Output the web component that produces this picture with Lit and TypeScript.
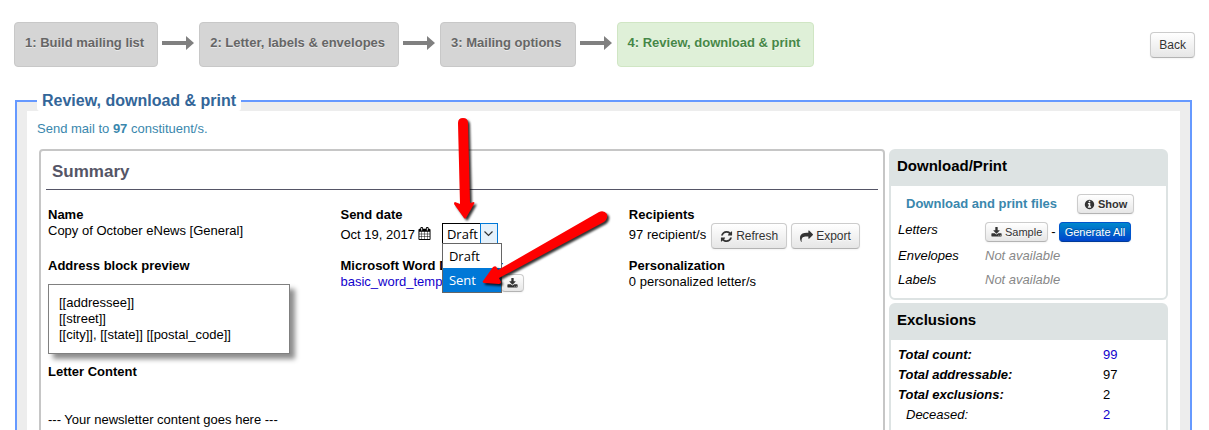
import { LitElement, html, css, svg } from "lit";
import { customElement, property, state } from "lit/decorators.js";
import { classMap } from "lit/directives/class-map.js";

const ICONS: Record<string, string> = {
  refresh:
    "M1639 1056q0 5-1 7-64 268-268 434.500t-478 166.500q-146 0-282.500-55t-243.500-157l-129 129q-19 19-45 19t-45-19-19-45v-448q0-26 19-45t45-19h448q26 0 45 19t19 45-19 45l-137 137q71 66 161 102t187 36q134 0 250-65t186-179q11-17 53-117 8-23 30-23h192q13 0 22.500 9.500t9.500 22.500zm25-800v448q0 26-19 45t-45 19h-448q-26 0-45-19t-19-45 19-45l138-138q-148-137-349-137-134 0-250 65t-186 179q-11 17-53 117-8 23-30 23h-199q-13 0-22.500-9.500t-9.500-22.500v-7q65-268 270-434.500t480-166.500q146 0 284 55.500t245 156.500l130-129q19-19 45-19t45 19 19 45z",
  share:
    "M1792 640q0 26-19 45l-512 512q-19 19-45 19t-45-19-19-45v-256h-224q-98 0-175.500 6t-154 21.500-133 42.500-105.500 69.500-80 101-48.500 138.500-17.500 181q0 55 5 123 0 6 2.500 23.500t2.500 26.500q0 15-8.500 25t-23.500 10q-16 0-28-17-7-9-13-22t-13.500-30-10.500-24q-127-285-127-451 0-199 53-333 162-403 875-403h224v-256q0-26 19-45t45-19 45 19l512 512q19 19 19 45z",
  info:
    "M1152 1376v-160q0-14-9-23t-23-9h-96v-512q0-14-9-23t-23-9h-320q-14 0-23 9t-9 23v160q0 14 9 23t23 9h96v320h-96q-14 0-23 9t-9 23v160q0 14 9 23t23 9h448q14 0 23-9t9-23zm-128-896v-160q0-14-9-23t-23-9h-192q-14 0-23 9t-9 23v160q0 14 9 23t23 9h192q14 0 23-9t9-23zm640 416q0 209-103 385.500t-279.500 279.500-385.500 103-385.500-103-279.500-279.500-103-385.500 103-385.500 279.500-279.500 385.500-103 385.500 103 279.500 279.500 103 385.500z",
  download:
    "M1344 1344q0-26-19-45t-45-19-45 19-19 45 19 45 45 19 45-19 19-45zm256 0q0-26-19-45t-45-19-45 19-19 45 19 45 45 19 45-19 19-45zm128-224v320q0 40-28 68t-68 28h-1472q-40 0-68-28t-28-68v-320q0-40 28-68t68-28h465l135 136q58 56 136 56t136-56l136-136h464q40 0 68 28t28 68zm-325-569q17 41-14 70l-448 448q-18 19-45 19t-45-19l-448-448q-31-29-14-70 17-39 59-39h256v-448q0-26 19-45t45-19h256q26 0 45 19t19 45v448h256q42 0 59 39z",
  calendar:
    "M192 1664h288v-288h-288v288zm352 0h320v-288h-320v288zm-352-352h288v-320h-288v320zm352 0h320v-320h-320v320zm-352-384h288v-288h-288v288zm736 736h320v-288h-320v288zm-384-736h320v-288h-320v288zm768 736h288v-288h-288v288zm-384-352h320v-320h-320v320zm-352-864v-288q0-13-9.500-22.500t-22.500-9.500h-64q-13 0-22.500 9.500t-9.500 22.500v288q0 13 9.500 22.500t22.500 9.500h64q13 0 22.500-9.500t9.500-22.500zm736 864h288v-320h-288v320zm-384-384h320v-288h-320v288zm384 0h288v-288h-288v288zm32-480v-288q0-13-9.500-22.500t-22.500-9.500h-64q-13 0-22.500 9.500t-9.500 22.500v288q0 13 9.500 22.500t22.500 9.500h64q13 0 22.500-9.500t9.500-22.500zm384-64v1280q0 52-38 90t-90 38h-1408q-52 0-90-38t-38-90v-1280q0-52 38-90t90-38h128v-96q0-66 47-113t113-47h64q66 0 113 47t47 113v96h384v-96q0-66 47-113t113-47h64q66 0 113 47t47 113v96h128q52 0 90 38t38 90z",
};

@customElement("app-icon")
export class AppIcon extends LitElement {
  @property() name = "info";

  static styles = css`
    :host { display: inline-flex; flex: none; width: 13px; height: 13px; }
    .glyph { width: 100%; height: 100%; fill: currentColor; overflow: visible; }
  `;

  render() {
    return html`<svg class="glyph" viewBox="0 0 1792 1792" aria-hidden="true">
      ${svg`<path d=${ICONS[this.name]} />`}
    </svg>`;
  }
}

@customElement("side-panel")
export class SidePanel extends LitElement {
  @property() heading = "";

  static styles = css`
    :host { display: block; border: 2px solid #dde3e3; border-radius: 6px; background: #fff; }
    .heading {
      margin: 0; padding: 5px 6px 10px; background: #dde3e3;
      font-size: 15px; line-height: 20px; font-weight: bold; color: #000;
    }
  `;

  render() {
    return html`<h2 class="heading">${this.heading}</h2><slot></slot>`;
  }
}

const STEPS = [
  "1: Build mailing list",
  "2: Letter, labels & envelopes",
  "3: Mailing options",
  "4: Review, download & print",
];

const EXCLUSIONS = [
  { label: "Total count:", value: "99", link: true, sub: false },
  { label: "Total addressable:", value: "97", link: false, sub: false },
  { label: "Total exclusions:", value: "2", link: false, sub: false },
  { label: "Deceased:", value: "2", link: true, sub: true },
];

@customElement("app-root")
export class AppRoot extends LitElement {
  @state() private status = "Draft";
  @state() private highlighted = "Sent";

  static styles = css`
    :host {
      display: block; position: relative; height: 100vh; overflow: hidden;
      background: #fff; color: #000;
      font: 13px/16px "Liberation Sans", Arial, sans-serif;
    }
    * { box-sizing: border-box; }
    a { color: #1100cc; text-decoration: none; }

    .top { display: flex; justify-content: space-between; align-items: flex-start; padding: 22px 14px 0; }
    .steps { display: flex; align-items: flex-start; gap: 5px; margin: 0; padding: 0; list-style: none; }
    .step { display: flex; align-items: flex-start; gap: 4px; }
    .box {
      height: 45px; padding: 12px 13px 12px 10px; border: 1px solid #c8c8c8; border-radius: 4px;
      background: #d5d5d5; color: #666; font-weight: bold; white-space: nowrap;
      text-shadow: 0 1px 0 rgba(255, 255, 255, 0.5);
    }
    .box.current { background: #dff0d8; border-color: #d0e6c4; color: #468847; }
    .next { width: 32px; height: 14px; margin-top: 14px; fill: #808080; }

    .btn {
      display: inline-flex; align-items: center; justify-content: center; gap: 3px;
      border: 1px solid #ccc; border-bottom-color: #b3b3b3; border-radius: 4px;
      background: linear-gradient(#fff, #e6e6e6); color: #333;
      font: 12px/16px "Liberation Sans", Arial, sans-serif;
      box-shadow: 0 1px 2px rgba(0, 0, 0, 0.05);
      text-shadow: 0 1px 1px rgba(255, 255, 255, 0.75);
      height: 26px; padding: 0 8px; white-space: nowrap; cursor: pointer;
    }
    .back { margin-top: 10px; }
    .small { height: 20px; padding: 0 6px; font-size: 11px; }
    .small app-icon { width: 11px; height: 11px; }
    .bold { font-weight: bold; }
    .icon-only { height: 18px; padding: 0 5px; margin-left: 7px; }
    .primary {
      background: linear-gradient(#0088cc, #0044cc); border-color: #0055cc #0055cc #003a99;
      color: #fff; text-shadow: 0 -1px 0 rgba(0, 0, 0, 0.25);
    }

    .review {
      margin: 24px 17px 0 15px; padding: 0 10px 10px; min-width: 0;
      border: 2px solid #6699ff; background: #ededed;
    }
    .title {
      margin-left: 10px; padding: 0 5px; border-radius: 3px; background: #fff;
      color: #336699; font-size: 16px; line-height: 20px; font-weight: bold;
    }
    .sheet { padding: 10px 12px 40px 10px; background: #fff; }
    .intro { margin: 0; color: #3a87ad; }
    .columns { display: grid; grid-template-columns: minmax(0, 1fr) 279px; gap: 4px; margin: 12px 0 0 2px; }

    .summary { border: 2px solid #c6c6c6; border-radius: 4px; padding: 11px 5px; min-height: 320px; }
    .heading {
      margin: 0; padding: 0 6px 7px; border-bottom: 1px solid #555566; color: #555566;
      font-size: 17px; line-height: 20px; font-weight: bold;
    }
    .facts {
      display: grid; grid-template-columns: 71fr 70fr 60fr; row-gap: 2px;
      padding: 17px 2px 0;
    }
    .label { margin: 0; font-size: 13px; line-height: 16px; font-weight: bold; white-space: nowrap; }
    .value { margin: 0; display: flex; align-items: flex-start; white-space: nowrap; }
    .roomy { height: 33px; }
    .date { padding-top: 4px; display: flex; gap: 3px; }
    .count { padding-top: 4px; margin-right: 5px; }
    .recipients .btn + .btn { margin-left: 4px; }

    .picker { position: relative; margin-left: 11px; }
    .select {
      appearance: none; display: block; width: 56px; height: 21px; padding: 0 0 0 4px; margin: 0;
      border: 1px solid #000; border-radius: 0; background: #fff; color: #000;
      font: 13px/18px "Open Sans", "Noto Sans", sans-serif;
    }
    .drop {
      position: absolute; top: 0; right: 0; width: 18px; height: 21px; pointer-events: none;
      border: 1px solid #0078d7; background: #e5f1fb;
      display: flex; align-items: center; justify-content: center;
    }
    .chevron { width: 9px; height: 6px; fill: none; stroke: #333; stroke-width: 1.2; }
    .menu {
      position: absolute; z-index: 1; top: 20px; left: 0; width: 60px; margin: 0; padding: 0;
      border: 1px solid #666; background: #fff; list-style: none;
      font: 13px/24px "Open Sans", "Noto Sans", sans-serif;
    }
    .option { padding-left: 6px; }
    .option.active { background: #0078d7; color: #fff; }

    .address {
      width: 242px; margin: 10px 0; padding: 10px; border: 1px solid #808080;
      background: #fff; box-shadow: 5px 5px 5px rgba(0, 0, 0, 0.45);
    }
    .letter { padding: 0 2px; }
    .body { margin: 32px 0 0; }

    .side { display: flex; flex-direction: column; gap: 3px; }
    .files { padding: 8px 7px 2px; }
    .files-head { display: flex; align-items: center; padding-left: 8px; gap: 20px; margin-bottom: 8px; }
    .files-title { margin: 0; font-size: 13px; line-height: 16px; color: #3a87ad; font-weight: bold; }
    .table { border-collapse: collapse; width: 100%; table-layout: fixed; }
    .table th, .table td { padding: 0; text-align: left; vertical-align: top; font-weight: normal; }
    .files .table th { width: 87px; height: 24px; font-style: italic; }
    .files .table .first th, .files .table .first td { height: 26px; }
    .table .none { color: #888; font-style: italic; }
    .actions { display: flex; align-items: center; gap: 3px; }
    .actions .small { padding: 0 5px; }
    .totals { padding: 5px 7px; min-height: 130px; }
    .totals .table th { width: 205px; height: 20px; line-height: 20px; font-style: italic; font-weight: bold; }
    .totals .table td { line-height: 20px; }
    .totals .table .sub th { font-weight: normal; padding-left: 8px; }

    .pointers {
      position: absolute; left: 0; top: 0; width: 640px; height: 300px; z-index: 2;
      pointer-events: none; fill: #fe0000; overflow: visible;
      filter: drop-shadow(2px 2px 1px rgba(0, 0, 0, 0.8));
    }
  `;

  private pick(value: string) {
    this.status = value;
    this.highlighted = value;
  }

  private renderSteps() {
    return STEPS.map(
      (step, i) => html`<li class="step">
        <span class=${classMap({ box: true, current: i === 3 })}>${step}</span>
        ${i < 3
          ? html`<svg class="next" viewBox="0 0 32 14" aria-hidden="true"><path d="M0 5H24V0L32 7L24 14V9H0Z" /></svg>`
          : ""}
      </li>`
    );
  }

  private renderPicker() {
    return html`<span class="picker">
      <select class="select" aria-label="Mailing status" .value=${this.status}>
        <option>Draft</option>
        <option>Sent</option>
      </select>
      <span class="drop"><svg class="chevron" viewBox="0 0 9 6"><path d="M0.500 0.500L4.500 4.500L8.500 0.500" /></svg></span>
      <ul class="menu" role="listbox" aria-label="Status choices">
        ${["Draft", "Sent"].map(
          (o) => html`<li
            role="option"
            aria-selected=${o === this.highlighted}
            class=${classMap({ option: true, active: o === this.highlighted })}
            @click=${() => this.pick(o)}
          >${o}</li>`
        )}
      </ul>
    </span>`;
  }

  private renderSummary() {
    return html`<section class="summary">
      <h2 class="heading">Summary</h2>
      <div class="facts">
        <div>
          <h3 class="label">Name</h3>
          <p class="value">Copy of October eNews [General]</p>
        </div>
        <div>
          <h3 class="label">Send date</h3>
          <div class="value roomy">
            <span class="date">Oct 19, 2017 <app-icon name="calendar"></app-icon></span>
            ${this.renderPicker()}
          </div>
        </div>
        <div class="recipients">
          <h3 class="label">Recipients</h3>
          <div class="value roomy">
            <span class="count">97 recipient/s</span>
            <button class="btn"><app-icon name="refresh"></app-icon>Refresh</button>
            <button class="btn"><app-icon name="share"></app-icon>Export</button>
          </div>
        </div>
        <div>
          <h3 class="label">Address block preview</h3>
          <div class="address">[[addressee]]<br />[[street]]<br />[[city]], [[state]] [[postal_code]]</div>
        </div>
        <div>
          <h3 class="label">Microsoft Word Document</h3>
          <div class="value">
            <a href="#template">basic_word_template.docx</a>
            <button class="btn small icon-only" aria-label="Download template"><app-icon name="download"></app-icon></button>
          </div>
        </div>
        <div>
          <h3 class="label">Personalization</h3>
          <p class="value">0 personalized letter/s</p>
        </div>
      </div>
      <div class="letter">
        <h3 class="label">Letter Content</h3>
        <p class="body">--- Your newsletter content goes here ---</p>
      </div>
    </section>`;
  }

  private renderSide() {
    return html`<div class="side">
      <side-panel heading="Download/Print">
        <div class="files">
          <div class="files-head">
            <h3 class="files-title">Download and print files</h3>
            <button class="btn small bold"><app-icon name="info"></app-icon>Show</button>
          </div>
          <table class="table">
            <tr class="first">
              <th scope="row">Letters</th>
              <td>
                <div class="actions">
                  <button class="btn small"><app-icon name="download"></app-icon>Sample</button>
                  <span>-</span>
                  <button class="btn small primary">Generate All</button>
                </div>
              </td>
            </tr>
            <tr><th scope="row">Envelopes</th><td class="none">Not available</td></tr>
            <tr><th scope="row">Labels</th><td class="none">Not available</td></tr>
          </table>
        </div>
      </side-panel>
      <side-panel heading="Exclusions">
        <div class="totals">
          <table class="table">
            ${EXCLUSIONS.map(
              (r) => html`<tr class=${classMap({ sub: r.sub })}>
                <th scope="row">${r.label}</th>
                <td>${r.link ? html`<a href="#list">${r.value}</a>` : r.value}</td>
              </tr>`
            )}
          </table>
        </div>
      </side-panel>
    </div>`;
  }

  render() {
    return html`
      <div class="top">
        <ol class="steps">${this.renderSteps()}</ol>
        <button class="btn back">Back</button>
      </div>
      <fieldset class="review">
        <legend class="title">Review, download &amp; print</legend>
        <div class="sheet">
          <p class="intro">Send mail to <b>97</b> constituent/s.</p>
          <div class="columns">${this.renderSummary()} ${this.renderSide()}</div>
        </div>
      </fieldset>
      <svg class="pointers" viewBox="0 0 640 300" aria-hidden="true">
        <path d="M458 123Q458 118 463 118Q468 118 468 123L470 203L474 202Q475 203 474 204L466 218Q465 219 464 218L454 204Q454 202 455 202L460 204Z" />
        <path d="M599 212Q604 210 607 214Q608 219 604 222L499 278L501 282Q501 284 499 284L484 283Q482 282 483 281L493 267Q496 265 497 268L498 270Z" />
      </svg>
    `;
  }
}
